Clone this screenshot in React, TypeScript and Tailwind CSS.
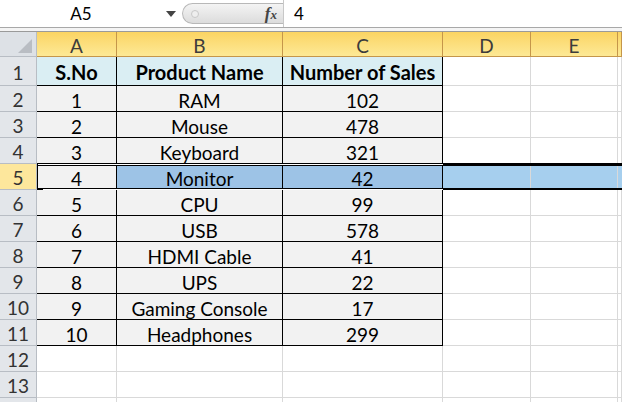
import React from "react";

const rows = [
  ["1", "RAM", "102"],
  ["2", "Mouse", "478"],
  ["3", "Keyboard", "321"],
  ["4", "Monitor", "42"],
  ["5", "CPU", "99"],
  ["6", "USB", "578"],
  ["7", "HDMI Cable", "41"],
  ["8", "UPS", "22"],
  ["9", "Gaming Console", "17"],
  ["10", "Headphones", "299"],
];

const cols = "grid grid-cols-[37px_80px_166px_160px_88px_87px_1fr]";

function RowHead({ n, active }: { n?: number; active?: boolean }) {
  return (
    <div
      className={`flex items-center justify-center pt-[2px] border-r border-b border-[#b8bdc4] text-[#333] ${
        active ? "bg-[#fde79c]" : "bg-[#e3e6ea]"
      }`}
    >
      {n}
    </div>
  );
}

function Empty() {
  return <div className="border-r border-b border-[#d9d9d9] bg-white" />;
}

export default function App() {
  return (
    <div
      className="w-[622px] h-[402px] overflow-hidden bg-white text-[19px] leading-none text-black"
      style={{ fontFamily: "Lato, 'Open Sans', sans-serif" }}
    >
      {/* formula bar */}
      <div className="flex h-[28px] border-b border-[#a8a8a8]">
        <div className="flex w-[182px] items-center">
          <span className="flex-1 text-center text-[17px] pr-[4px]">A5</span>
          <svg width="10" height="6" viewBox="0 0 10 6" className="mr-[6px]">
            <path d="M0 0h10L5 6z" fill="#444" />
          </svg>
        </div>
        <div className="my-[3px] flex w-[101px] items-center rounded-l-full border border-r-0 border-[#b8b8b8] bg-gradient-to-b from-[#f4f4f4] to-[#dcdcdc]">
          <span className="ml-[8px] h-[8px] w-[8px] rounded-full bg-[#eeeeee] border border-[#c8c8c8]" />
          <span
            className="ml-auto mr-[6px] text-[17px] italic font-bold text-[#444]"
            style={{ fontFamily: "'Liberation Serif', serif" }}
          >
            f<span className="text-[13px]">x</span>
          </span>
        </div>
        <div className="flex flex-1 items-center border-l border-[#c8c8c8] pl-[10px] text-[17px]">4</div>
      </div>
      <div className="h-[4px] border-b border-[#9a9a9a] bg-[#f4f4f4]" />

      {/* column headers */}
      <div className={`${cols} h-[25px]`}>
        <div className="relative border-r border-b border-[#b8bdc4] bg-[#dde1e6]">
          <svg width="14" height="14" className="absolute right-[4px] bottom-[3px]">
            <path d="M14 0V14H0z" fill="#b9bdc3" />
          </svg>
        </div>
        {["A", "B", "C", "D", "E", ""].map((c, i) => (
          <div
            key={i}
            className="flex items-center justify-center pt-[2px] border-r border-b border-[#c5964a] bg-gradient-to-b from-[#fbd462] to-[#fde995] text-[#3c3c3c]"
          >
            {c}
          </div>
        ))}
      </div>

      {/* row 1 */}
      <div className={`${cols} h-[29px]`}>
        <RowHead n={1} />
        {["S.No", "Product Name", "Number of Sales"].map((t) => (
          <div
            key={t}
            className="flex items-center justify-center pt-[2px] border-r border-b border-black bg-[#daeef3] text-[20px] font-bold whitespace-nowrap"
          >
            {t}
          </div>
        ))}
        <Empty />
        <Empty />
        <Empty />
      </div>

      {rows.map((r, i) => {
        const n = i + 2;
        const sel = n === 5;
        return (
          <div key={n} className={`${cols} relative h-[26px]`}>
            <RowHead n={n} active={sel} />
            {r.map((t, j) => (
              <div
                key={j}
                className={`flex items-center justify-center pt-[3px] border-r border-b border-black whitespace-nowrap ${
                  sel && j > 0 ? "bg-[#9dc3e6]" : "bg-[#f2f2f2]"
                }`}
              >
                {t}
              </div>
            ))}
            {sel ? (
              <>
                <div className="border-r border-[#d9d9d9] bg-[#a6cfee]" />
                <div className="border-r border-[#d9d9d9] bg-[#a6cfee]" />
                <div className="bg-[#a6cfee]" />
                <div className="pointer-events-none absolute left-[37px] right-0 top-[-1px] h-[28px] border-y-[3px] border-l border-black" />
                <div className="pointer-events-none absolute left-[38px] w-[405px] top-0 h-px bg-white" />
                <div className="pointer-events-none absolute left-[38px] w-[405px] top-[25px] h-px bg-white" />
                <div className="absolute left-[37px] top-[24px] h-[4px] w-[6px] bg-black" />
              </>
            ) : (
              <>
                <Empty />
                <Empty />
                <Empty />
              </>
            )}
          </div>
        );
      })}

      {[12, 13, 0].map((n) => (
        <div key={n} className={`${cols} h-[26px]`}>
          <RowHead n={n || undefined} />
          <Empty />
          <Empty />
          <Empty />
          <Empty />
          <Empty />
          <Empty />
        </div>
      ))}
    </div>
  );
}
